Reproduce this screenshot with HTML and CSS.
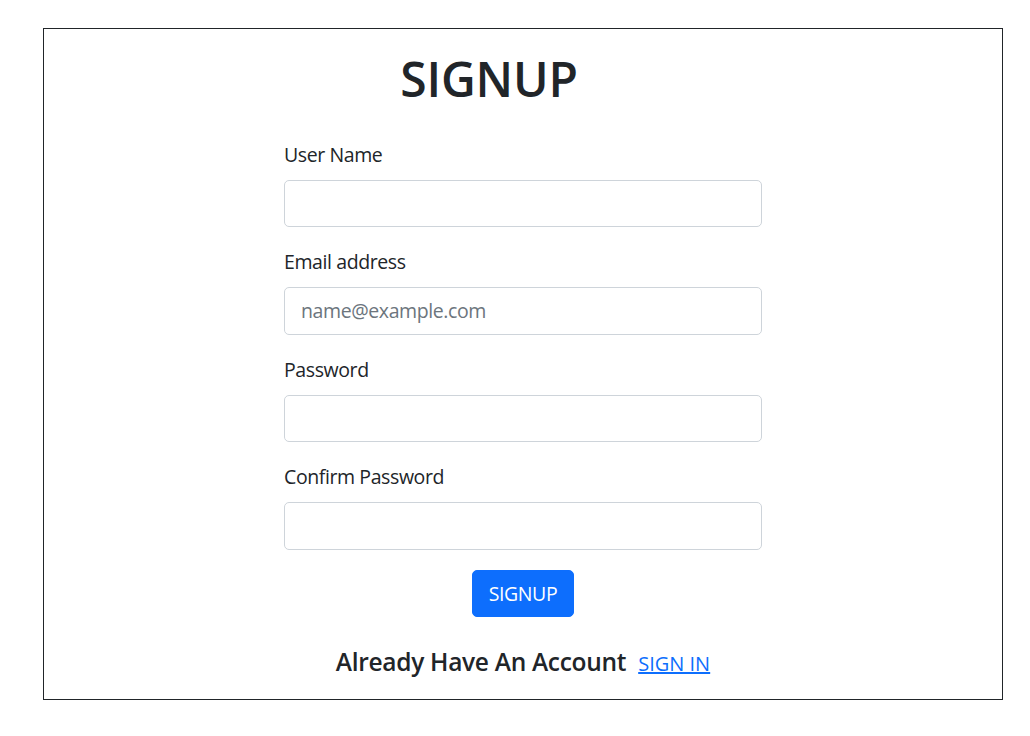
FILE: index.html
```html
<!DOCTYPE html>
<html lang="en">
<head>
<meta charset="utf-8">
<title>Signup</title>
<link rel="stylesheet" href="styles.css">
</head>
<body>
<div class="frame">
  <h1 class="title">SIGNUP</h1>
  <form class="form">
    <div class="field">
      <label class="label" for="uname">User Name</label>
      <input class="input" id="uname" type="text">
    </div>
    <div class="field">
      <label class="label" for="email">Email address</label>
      <input class="input" id="email" type="email" placeholder="name@example.com">
    </div>
    <div class="field">
      <label class="label" for="pw">Password</label>
      <input class="input" id="pw" type="password">
    </div>
    <div class="field">
      <label class="label" for="cpw">Confirm Password</label>
      <input class="input" id="cpw" type="password">
    </div>
    <div class="actions">
      <button class="btn" type="button">SIGNUP</button>
    </div>
  </form>
  <div class="footer">
    <span class="footer-text">Already Have An Account</span>
    <a class="link" href="#">SIGN IN</a>
  </div>
</div>
</body>
</html>
```

FILE: styles.css
```css
* { box-sizing: border-box; }

body {
  margin: 0;
  background: #fff;
  color: #212529;
  font-family: "Open Sans", "Noto Sans", sans-serif;
}

.frame {
  margin: 28px 27px 0 43px;
  border: 1px solid #212529;
  padding: 21px 0 22px;
}

.title {
  margin: 0 0 32px;
  padding-right: 68px;
  text-align: center;
  font-size: 48px;
  line-height: 1.2;
  font-weight: 600;
  letter-spacing: -0.2px;
}

.form {
  width: 478px;
  margin: 0 auto;
}

.field {
  margin-bottom: 20px;
}

.label {
  display: block;
  font-size: 19.5px;
  letter-spacing: -0.4px;
  line-height: 30px;
  margin-bottom: 10px;
}

.input {
  display: block;
  width: 100%;
  height: 47.5px;
  padding: 0 16px;
  border: 1px solid #ced4da;
  border-radius: 5px;
  font-family: inherit;
  font-size: 19.5px;
  letter-spacing: -0.4px;
  color: #212529;
  background: #fff;
  outline: none;
}

.input::placeholder {
  color: #6c757d;
}

.actions {
  display: flex;
  justify-content: center;
}

.btn {
  height: 47.5px;
  padding: 0 16px;
  border: 1px solid #0d6efd;
  border-radius: 5px;
  background: #0d6efd;
  color: #fff;
  font-family: inherit;
  font-size: 19.5px;
  letter-spacing: -0.4px;
}

.footer {
  display: flex;
  justify-content: center;
  align-items: baseline;
  gap: 12px;
  margin-top: 29px;
}

.footer-text {
  font-size: 24.5px;
  line-height: 31px;
  font-weight: 600;
  letter-spacing: -0.3px;
}

.link {
  font-size: 20px;
  letter-spacing: 0;
  color: #0d6efd;
  text-decoration: underline;
}
```
